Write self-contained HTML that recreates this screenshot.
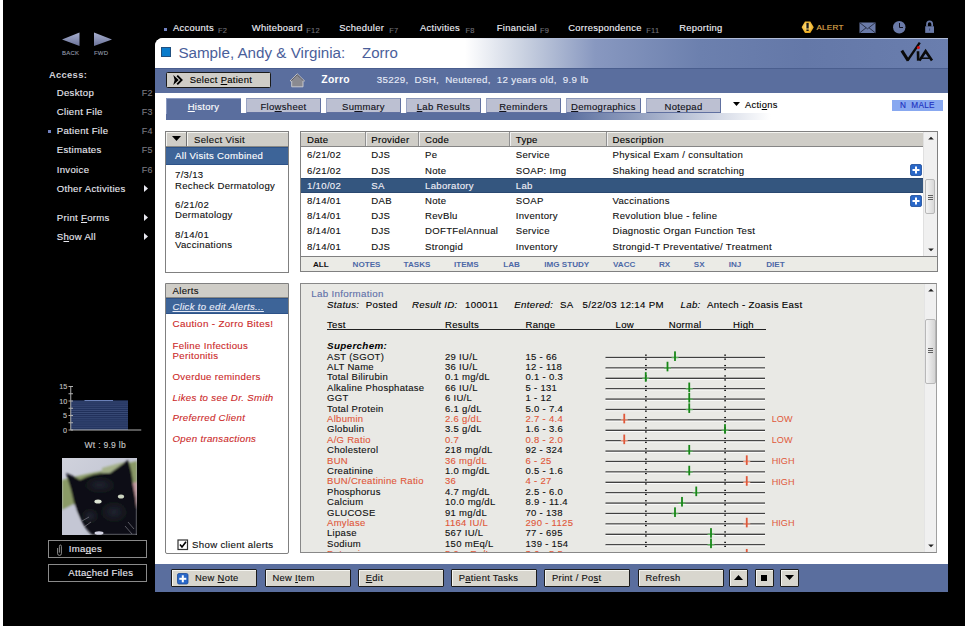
<!DOCTYPE html>
<html><head><meta charset="utf-8"><style>
html,body{margin:0;padding:0}
body{width:980px;height:626px;overflow:hidden;background:#000;position:relative;font-family:"Liberation Sans", sans-serif}
.t{position:absolute;white-space:pre;line-height:14px;font-family:"Liberation Sans", sans-serif}
.s{-webkit-text-stroke:0.12px currentColor}
u{text-decoration:underline}
</style></head><body>
<div style="position:absolute;left:0px;top:0px;width:3px;height:626px;background:#fff"></div>
<div style="position:absolute;left:965px;top:0px;width:15px;height:626px;background:#fff"></div>
<svg style="position:absolute;left:0;top:0" width="150" height="60">
<defs><linearGradient id="ag" x1="0" y1="0" x2="0" y2="1"><stop offset="0" stop-color="#a8b0d0"/><stop offset="1" stop-color="#6a7298"/></linearGradient></defs>
<polygon points="62,39.5 79.5,32.5 79.5,46" fill="url(#ag)"/>
<polygon points="112,39.5 94,32.5 94,46" fill="url(#ag)"/>
</svg>
<div class="t s" style="left:62.00px;top:46.42px;font-size:6.02px;letter-spacing:0.19px;color:#9098a8;font-weight:400;font-style:normal;">BACK</div>
<div class="t s" style="left:94.00px;top:46.42px;font-size:6.02px;letter-spacing:0.19px;color:#9098a8;font-weight:400;font-style:normal;">FWD</div>
<div class="t" style="left:49.00px;top:67.96px;font-size:9.40px;letter-spacing:0.30px;color:#d0d0d8;font-weight:700;font-style:normal;">Access:</div>
<div class="t s" style="left:56.75px;top:85.96px;font-size:9.59px;letter-spacing:0.31px;color:#e8e8f0;font-weight:400;font-style:normal;">Desktop</div>
<div class="t s" style="left:141.75px;top:85.95px;font-size:8.93px;letter-spacing:0.29px;color:#7a7a80;font-weight:400;font-style:normal;">F2</div>
<div class="t s" style="left:56.75px;top:104.96px;font-size:9.59px;letter-spacing:0.31px;color:#e8e8f0;font-weight:400;font-style:normal;">Client File</div>
<div class="t s" style="left:141.75px;top:104.95px;font-size:8.93px;letter-spacing:0.29px;color:#7a7a80;font-weight:400;font-style:normal;">F3</div>
<div class="t s" style="left:56.75px;top:123.96px;font-size:9.59px;letter-spacing:0.31px;color:#e8e8f0;font-weight:400;font-style:normal;">Patient File</div>
<div class="t s" style="left:141.75px;top:123.95px;font-size:8.93px;letter-spacing:0.29px;color:#7a7a80;font-weight:400;font-style:normal;">F4</div>
<div class="t s" style="left:56.75px;top:143.46px;font-size:9.59px;letter-spacing:0.31px;color:#e8e8f0;font-weight:400;font-style:normal;">Estimates</div>
<div class="t s" style="left:141.75px;top:143.45px;font-size:8.93px;letter-spacing:0.29px;color:#7a7a80;font-weight:400;font-style:normal;">F5</div>
<div class="t s" style="left:56.75px;top:162.71px;font-size:9.59px;letter-spacing:0.31px;color:#e8e8f0;font-weight:400;font-style:normal;">Invoice</div>
<div class="t s" style="left:141.75px;top:162.70px;font-size:8.93px;letter-spacing:0.29px;color:#7a7a80;font-weight:400;font-style:normal;">F6</div>
<div class="t s" style="left:56.75px;top:182.21px;font-size:9.59px;letter-spacing:0.31px;color:#e8e8f0;font-weight:400;font-style:normal;">Other Activities</div>
<div style="position:absolute;left:47.5px;top:129.5px;width:3px;height:3px;background:#7080c0"></div>
<div class="t s" style="left:56.75px;top:210.96px;font-size:9.59px;letter-spacing:0.31px;color:#e8e8f0;font-weight:400;font-style:normal;">Print <u>F</u>orms</div>
<div class="t s" style="left:56.75px;top:230.21px;font-size:9.59px;letter-spacing:0.31px;color:#e8e8f0;font-weight:400;font-style:normal;">S<u>h</u>ow All</div>
<svg style="position:absolute;left:143px;top:185.25px" width="6" height="8"><polygon points="1,0 5,3.5 1,7" fill="#e8e8f0"/></svg>
<svg style="position:absolute;left:143px;top:214.0px" width="6" height="8"><polygon points="1,0 5,3.5 1,7" fill="#e8e8f0"/></svg>
<svg style="position:absolute;left:143px;top:233.25px" width="6" height="8"><polygon points="1,0 5,3.5 1,7" fill="#e8e8f0"/></svg>
<svg style="position:absolute;left:50px;top:380px" width="100" height="60"><rect x="20.75" y="20.25" width="57.25" height="29.75" fill="#20305a"/><line x1="20.75" x2="78" y1="22.00" y2="22.00" stroke="#3c4e7a" stroke-width="0.9"/><line x1="20.75" x2="78" y1="24.10" y2="24.10" stroke="#3c4e7a" stroke-width="0.9"/><line x1="20.75" x2="78" y1="26.20" y2="26.20" stroke="#3c4e7a" stroke-width="0.9"/><line x1="20.75" x2="78" y1="28.30" y2="28.30" stroke="#3c4e7a" stroke-width="0.9"/><line x1="20.75" x2="78" y1="30.40" y2="30.40" stroke="#3c4e7a" stroke-width="0.9"/><line x1="20.75" x2="78" y1="32.50" y2="32.50" stroke="#3c4e7a" stroke-width="0.9"/><line x1="20.75" x2="78" y1="34.60" y2="34.60" stroke="#3c4e7a" stroke-width="0.9"/><line x1="20.75" x2="78" y1="36.70" y2="36.70" stroke="#3c4e7a" stroke-width="0.9"/><line x1="20.75" x2="78" y1="38.80" y2="38.80" stroke="#3c4e7a" stroke-width="0.9"/><line x1="20.75" x2="78" y1="40.90" y2="40.90" stroke="#3c4e7a" stroke-width="0.9"/><line x1="20.75" x2="78" y1="43.00" y2="43.00" stroke="#3c4e7a" stroke-width="0.9"/><line x1="20.75" x2="78" y1="45.10" y2="45.10" stroke="#3c4e7a" stroke-width="0.9"/><line x1="20.75" x2="78" y1="47.20" y2="47.20" stroke="#3c4e7a" stroke-width="0.9"/><line x1="20.75" x2="78" y1="49.30" y2="49.30" stroke="#3c4e7a" stroke-width="0.9"/><line x1="34.5" x2="63" y1="20.5" y2="20.5" stroke="#6a80b8" stroke-width="1"/><line x1="20.75" x2="20.75" y1="6" y2="50" stroke="#b0b0b0" stroke-width="1"/><line x1="20.75" x2="91.25" y1="50" y2="50" stroke="#b0b0b0" stroke-width="1"/><line x1="18.5" x2="23" y1="6.5" y2="6.5" stroke="#b0b0b0" stroke-width="1"/><line x1="18.5" x2="23" y1="21" y2="21" stroke="#b0b0b0" stroke-width="1"/><line x1="18.5" x2="23" y1="35.5" y2="35.5" stroke="#b0b0b0" stroke-width="1"/><line x1="18.5" x2="23" y1="50" y2="50" stroke="#b0b0b0" stroke-width="1"/><line x1="18.5" x2="23" y1="13.75" y2="13.75" stroke="#b0b0b0" stroke-width="1"/><line x1="18.5" x2="23" y1="28.25" y2="28.25" stroke="#b0b0b0" stroke-width="1"/><line x1="18.5" x2="23" y1="42.75" y2="42.75" stroke="#b0b0b0" stroke-width="1"/></svg>
<div class="t s" style="left:59.30px;top:380.43px;font-size:7.20px;letter-spacing:0.00px;color:#c0c0c0;font-weight:400;font-style:normal;">15</div>
<div class="t s" style="left:59.30px;top:394.93px;font-size:7.20px;letter-spacing:0.00px;color:#c0c0c0;font-weight:400;font-style:normal;">10</div>
<div class="t s" style="left:63.00px;top:409.43px;font-size:7.20px;letter-spacing:0.00px;color:#c0c0c0;font-weight:400;font-style:normal;">5</div>
<div class="t s" style="left:63.00px;top:423.93px;font-size:7.20px;letter-spacing:0.00px;color:#c0c0c0;font-weight:400;font-style:normal;">0</div>
<div class="t s" style="left:84.50px;top:437.70px;font-size:8.55px;letter-spacing:0.27px;color:#c8c8c8;font-weight:400;font-style:normal;">Wt : 9.9 lb</div>
<svg style="position:absolute;left:62px;top:458px" width="75" height="77" viewBox="0 0 75 77">
<defs><filter id="bl" x="-5%" y="-5%" width="110%" height="110%"><feGaussianBlur stdDeviation="0.9"/></filter><radialGradient id="fur"><stop offset="0" stop-color="#2c3244" stop-opacity="0.55"/><stop offset="1" stop-color="#2c3244" stop-opacity="0"/></radialGradient>
<linearGradient id="cbg" x1="0" y1="0" x2="1" y2="1"><stop offset="0" stop-color="#d0d2dc"/><stop offset="1" stop-color="#b8bccc"/></linearGradient></defs>
<rect width="75" height="77" fill="url(#cbg)"/>
<g filter="url(#bl)">
<polygon points="0,22 12,19 25,16 45,12 62,6 75,3 75,28 55,22 20,30 12,48 0,56" fill="#8a9a66"/>
<polygon points="40,10 58,5 66,4 58,16 40,16" fill="#a4b088"/>
<polygon points="0,52 12,46 22,77 0,77" fill="#c4c6d4"/>
<polygon points="66,26 75,24 75,64 69,62" fill="#c49a9e"/>
<path d="M4,15 Q12,18 18,22 Q32,14 48,15 L66,2 Q70,12 71,26 Q74,40 75,52 L75,77 L30,77 Q22,70 18,60 Q12,48 9,32 Z" fill="#0f1016"/>
<ellipse cx="38" cy="27" rx="16" ry="9" fill="url(#fur)"/>
<ellipse cx="52" cy="54" rx="14" ry="11" fill="url(#fur)"/>
<ellipse cx="28" cy="58" rx="9" ry="8" fill="url(#fur)"/>
</g>
<ellipse cx="36" cy="43.5" rx="3.6" ry="2.1" fill="#dce4d4"/>
<ellipse cx="59" cy="38.5" rx="3.1" ry="2" fill="#ccd4c0"/>
<ellipse cx="37" cy="75" rx="4.5" ry="1.8" fill="#d4d4e4"/>
<path d="M20,63 L27,59 M22,69 L29,64 M66,64 L72,71 M63,68 L70,76" stroke="#a8a8b0" stroke-width="0.5"/>
</svg>
<div style="position:absolute;left:48.25px;top:540px;width:98.5px;height:17.5px;border:1px solid #8a8a8a;box-sizing:border-box"></div>
<div style="position:absolute;left:48.25px;top:564.25px;width:98.5px;height:17.25px;border:1px solid #8a8a8a;box-sizing:border-box"></div>
<svg style="position:absolute;left:56px;top:544px" width="8" height="13"><path d="M1.6,4 L1.6,9.6 Q1.6,11.4 3.5,11.4 Q5.4,11.4 5.4,9.6 L5.4,2.4 Q5.4,1 4.4,1 Q3.4,1 3.4,2.4 L3.4,8.6" fill="none" stroke="#b8b8b8" stroke-width="0.75"/></svg>
<div class="t s" style="left:68.75px;top:542.46px;font-size:9.59px;letter-spacing:0.31px;color:#e8e8f0;font-weight:400;font-style:normal;">Ima<u>g</u>es</div>
<div class="t s" style="left:68.25px;top:566.46px;font-size:9.59px;letter-spacing:0.31px;color:#e8e8f0;font-weight:400;font-style:normal;">Atta<u>c</u>hed Files</div>
<div style="position:absolute;left:164px;top:27.5px;width:3px;height:3px;background:#7080c0"></div>
<div class="t s" style="left:173.00px;top:21.46px;font-size:9.40px;letter-spacing:0.30px;color:#f0f0f8;font-weight:400;font-style:normal;">Accounts</div>
<div class="t s" style="left:218.00px;top:24.44px;font-size:7.52px;letter-spacing:0.24px;color:#707078;font-weight:400;font-style:normal;">F2</div>
<div class="t s" style="left:251.75px;top:21.46px;font-size:9.40px;letter-spacing:0.30px;color:#f0f0f8;font-weight:400;font-style:normal;">Whiteboard</div>
<div class="t s" style="left:306.25px;top:24.44px;font-size:7.52px;letter-spacing:0.24px;color:#707078;font-weight:400;font-style:normal;">F12</div>
<div class="t s" style="left:339.25px;top:21.46px;font-size:9.40px;letter-spacing:0.30px;color:#f0f0f8;font-weight:400;font-style:normal;">Scheduler</div>
<div class="t s" style="left:389.25px;top:24.44px;font-size:7.52px;letter-spacing:0.24px;color:#707078;font-weight:400;font-style:normal;">F7</div>
<div class="t s" style="left:420.00px;top:21.46px;font-size:9.40px;letter-spacing:0.30px;color:#f0f0f8;font-weight:400;font-style:normal;">Activities</div>
<div class="t s" style="left:465.50px;top:24.44px;font-size:7.52px;letter-spacing:0.24px;color:#707078;font-weight:400;font-style:normal;">F8</div>
<div class="t s" style="left:496.75px;top:21.46px;font-size:9.40px;letter-spacing:0.30px;color:#f0f0f8;font-weight:400;font-style:normal;">Financial</div>
<div class="t s" style="left:540.00px;top:24.44px;font-size:7.52px;letter-spacing:0.24px;color:#707078;font-weight:400;font-style:normal;">F9</div>
<div class="t s" style="left:568.25px;top:21.46px;font-size:9.40px;letter-spacing:0.30px;color:#f0f0f8;font-weight:400;font-style:normal;">Correspondence</div>
<div class="t s" style="left:646.25px;top:24.44px;font-size:7.52px;letter-spacing:0.24px;color:#707078;font-weight:400;font-style:normal;">F11</div>
<div class="t s" style="left:679.25px;top:21.46px;font-size:9.40px;letter-spacing:0.30px;color:#f0f0f8;font-weight:400;font-style:normal;">Reporting</div>
<svg style="position:absolute;left:800px;top:20px" width="140" height="16">
<defs><radialGradient id="yg" cx="0.45" cy="0.45" r="0.6"><stop offset="0" stop-color="#fde6a0"/><stop offset="0.6" stop-color="#f4c040"/><stop offset="1" stop-color="#e09a10"/></radialGradient></defs>
<polygon points="1.6,7.2 5,1.4 10.3,1.4 13.8,7.2 10.3,13 5,13" fill="url(#yg)"/>
<rect x="6.4" y="2.9" width="2.3" height="5.6" fill="#1a1a1a"/><rect x="6.4" y="9.5" width="2.3" height="1.5" fill="#1a1a1a"/>
<rect x="59.5" y="2.5" width="16" height="10.5" fill="#6a7aa8"/>
<polyline points="59.5,2.5 67.5,8.8 75.5,2.5" fill="none" stroke="#1a2030" stroke-width="0.8"/>
<line x1="59.5" y1="13" x2="66" y2="7.8" stroke="#1a2030" stroke-width="0.8"/><line x1="75.5" y1="13" x2="69" y2="7.8" stroke="#1a2030" stroke-width="0.8"/>
<circle cx="99.25" cy="7.25" r="6.2" fill="#6a7aa8"/>
<polyline points="99.5,3 99.5,7.5 103,7.5" fill="none" stroke="#101020" stroke-width="1"/>
<path d="M127,6.5 L127,4.2 Q127,1.4 129.6,1.4 Q132.2,1.4 132.2,4.2 L132.2,6.5" fill="none" stroke="#6a7aa8" stroke-width="1.7"/>
<rect x="125.2" y="6.3" width="8.8" height="6.6" fill="#6a7aa8"/><rect x="129.1" y="8.5" width="1" height="2.2" fill="#3a4670"/>
</svg>
<div class="t s" style="left:816.40px;top:21.24px;font-size:8.08px;letter-spacing:0.26px;color:#e0b050;font-weight:400;font-style:normal;">ALERT</div>
<div style="position:absolute;left:155px;top:37.5px;width:793px;height:554.5px;background:#fff;border-top-left-radius:8px"></div>
<div style="position:absolute;left:155px;top:37.5px;width:793px;height:30.5px;border-top-left-radius:8px;background:linear-gradient(to right,#ffffff 0px,#ffffff 310px,#c8d0e0 370px,#8898c0 440px,#6c80ae 545px,#6478a8 650px,#6a7eae 793px)"></div>
<div style="position:absolute;left:161px;top:37.6px;width:787px;height:1.2px;background:linear-gradient(to right,rgba(176,188,216,0) 0px,rgba(176,188,216,0) 300px,#b0bcd8 420px)"></div>
<div style="position:absolute;left:161px;top:47px;width:10px;height:10px;background:#0a7ccc;border:1px solid #205080;box-sizing:border-box"></div>
<div class="t" style="left:178.40px;top:45.72px;font-size:15.20px;letter-spacing:0.00px;color:#4a5e9a;font-weight:400;font-style:normal;">Sample, Andy &amp; Virginia:</div>
<div class="t" style="left:362.00px;top:45.72px;font-size:15.00px;letter-spacing:0.00px;color:#4a5e9a;font-weight:400;font-style:normal;">Zorro</div>
<svg style="position:absolute;left:895px;top:38px" width="45" height="28">
<path d="M6.8,12.6 L13.2,22.6" fill="none" stroke="#0a0a0a" stroke-width="3"/>
<path d="M12.4,22.6 L24.8,4.6" fill="none" stroke="#0a0a0a" stroke-width="2.4"/>
<path d="M23,13.2 L23.2,22.6" fill="none" stroke="#0a0a0a" stroke-width="2.6"/>
<path d="M24.4,22.6 L30.6,13.2 L37,22.6" fill="none" stroke="#0a0a0a" stroke-width="2.6" stroke-linejoin="miter"/>
<line x1="26.5" y1="20.2" x2="34.5" y2="20.2" stroke="#0a0a0a" stroke-width="1.5"/>
<circle cx="23.4" cy="9.5" r="1.5" fill="#e01010"/>
</svg>
<div style="position:absolute;left:155px;top:67.8px;width:793px;height:25px;background:#5a6e9e;border-top:1px solid #4a5e8e;box-sizing:border-box"></div>
<div style="position:absolute;left:166px;top:71.5px;width:105px;height:16.8px;background:#cfcdc7;border:1.6px solid #1a1a1a;border-radius:1.5px;box-sizing:border-box"></div>
<svg style="position:absolute;left:170px;top:72px" width="16" height="16"><polygon points="3.3,3.1 8.7,8 3.3,12.9 4.6,8" fill="#000"/><polyline points="7.2,3.6 11.6,8 7.2,12.4" fill="none" stroke="#000" stroke-width="1.9"/></svg>
<div class="t s" style="left:189.70px;top:72.96px;font-size:9.45px;letter-spacing:0.30px;color:#000;font-weight:400;font-style:normal;">Select <u>P</u>atient</div>
<svg style="position:absolute;left:288px;top:72px" width="19" height="17"><polygon points="9.2,1.8 16.5,8.9 15,8.9 15,14.8 3.7,14.8 3.7,8.9 2.1,8.9" fill="#8a8a90" stroke="#d0d0d4" stroke-width="0.9"/><polyline points="3.2,8.6 9.2,2.8 15.4,8.6" fill="none" stroke="#303038" stroke-width="0.9" stroke-dasharray="1,0.6"/></svg>
<div class="t" style="left:321.25px;top:72.97px;font-size:10.34px;letter-spacing:0.33px;color:#fff;font-weight:700;font-style:normal;">Zorro</div>
<div class="t s" style="left:376.75px;top:72.96px;font-size:9.78px;letter-spacing:0.31px;color:#e8ecf8;font-weight:400;font-style:normal;">35229,  DSH,  Neutered,  12 years old,  9.9 lb</div>
<div style="position:absolute;left:165.5px;top:113px;width:605px;height:6.7px;background:linear-gradient(to right,#5a6e9e 0px,#5a6e9e 400px,#ffffff 605px)"></div>
<div style="position:absolute;left:166px;top:98px;width:75px;height:16px;background:#5a6e9e;border-top:1.5px solid #8898c0;border-left:1.5px solid #8898c0;box-sizing:border-box"></div>
<div class="t s" style="left:166px;top:99px;width:75px;text-align:center;font-size:9.5px;letter-spacing:0.3px;line-height:16px;color:#fff"><u>H</u>istory</div>
<div style="position:absolute;left:246px;top:98px;width:75px;height:15px;background:#bcc0d2;border:1px solid #6070a0;border-top-color:#8a96b8;border-left-color:#9aa4c4;box-sizing:border-box"></div>
<div class="t s" style="left:246px;top:99.3px;width:75px;text-align:center;font-size:9.5px;letter-spacing:0.3px;line-height:16px;color:#101018">Flo<u>w</u>sheet</div>
<div style="position:absolute;left:326px;top:98px;width:75px;height:15px;background:#bcc0d2;border:1px solid #6070a0;border-top-color:#8a96b8;border-left-color:#9aa4c4;box-sizing:border-box"></div>
<div class="t s" style="left:326px;top:99.3px;width:75px;text-align:center;font-size:9.5px;letter-spacing:0.3px;line-height:16px;color:#101018">Su<u>m</u>mary</div>
<div style="position:absolute;left:406px;top:98px;width:75px;height:15px;background:#bcc0d2;border:1px solid #6070a0;border-top-color:#8a96b8;border-left-color:#9aa4c4;box-sizing:border-box"></div>
<div class="t s" style="left:406px;top:99.3px;width:75px;text-align:center;font-size:9.5px;letter-spacing:0.3px;line-height:16px;color:#101018"><u>L</u>ab Results</div>
<div style="position:absolute;left:486px;top:98px;width:75px;height:15px;background:#bcc0d2;border:1px solid #6070a0;border-top-color:#8a96b8;border-left-color:#9aa4c4;box-sizing:border-box"></div>
<div class="t s" style="left:486px;top:99.3px;width:75px;text-align:center;font-size:9.5px;letter-spacing:0.3px;line-height:16px;color:#101018"><u>R</u>eminders</div>
<div style="position:absolute;left:566px;top:98px;width:75px;height:15px;background:#bcc0d2;border:1px solid #6070a0;border-top-color:#8a96b8;border-left-color:#9aa4c4;box-sizing:border-box"></div>
<div class="t s" style="left:566px;top:99.3px;width:75px;text-align:center;font-size:9.5px;letter-spacing:0.3px;line-height:16px;color:#101018"><u>D</u>emographics</div>
<div style="position:absolute;left:646px;top:98px;width:75px;height:15px;background:#bcc0d2;border:1px solid #6070a0;border-top-color:#8a96b8;border-left-color:#9aa4c4;box-sizing:border-box"></div>
<div class="t s" style="left:646px;top:99.3px;width:75px;text-align:center;font-size:9.5px;letter-spacing:0.3px;line-height:16px;color:#101018">No<u>t</u>epad</div>
<svg style="position:absolute;left:733px;top:102px" width="8" height="6"><polygon points="0,0 7,0 3.5,4" fill="#000"/></svg>
<div class="t s" style="left:745.00px;top:98.46px;font-size:9.31px;letter-spacing:0.30px;color:#000;font-weight:400;font-style:normal;">Acti<u>o</u>ns</div>
<div style="position:absolute;left:892px;top:100px;width:50.5px;height:10.5px;background:#88a8f0"></div>
<div class="t s" style="left:900.00px;top:98.94px;font-size:8.22px;letter-spacing:0.26px;color:#2030c0;font-weight:400;font-style:normal;">N&nbsp;&nbsp;MALE</div>
<div style="position:absolute;left:165px;top:131px;width:124px;height:141.5px;border:1px solid #808080;background:#fff;box-sizing:border-box"></div>
<div style="position:absolute;left:166px;top:132px;width:21px;height:14.5px;background:#cfcdc7;border-right:1px solid #707070;border-bottom:1px solid #8a8a86;box-shadow:inset 1px 1px 0 #f4f4f0;box-sizing:border-box"></div>
<div style="position:absolute;left:187px;top:132px;width:101px;height:14.5px;background:#cfcdc7;border-bottom:1px solid #8a8a86;box-shadow:inset 1px 1px 0 #f4f4f0;box-sizing:border-box"></div>
<svg style="position:absolute;left:171px;top:135px" width="12" height="8"><polygon points="1,1 10,1 5.5,6" fill="#000"/></svg>
<div class="t s" style="left:194.00px;top:133.06px;font-size:9.59px;letter-spacing:0.31px;color:#101010;font-weight:400;font-style:normal;">Select Visit</div>
<div style="position:absolute;left:166px;top:146.5px;width:122px;height:18.5px;background:#3d6498;border-top:1px solid #2d5288;border-bottom:1px solid #2d5288;box-sizing:border-box"></div>
<div class="t s" style="left:175.00px;top:149.46px;font-size:9.59px;letter-spacing:0.31px;color:#fff;font-weight:400;font-style:normal;">All Visits Combined</div>
<div class="t s" style="left:175.00px;top:168.46px;font-size:9.59px;letter-spacing:0.31px;color:#101010;font-weight:400;font-style:normal;">7/3/13</div>
<div class="t s" style="left:175.00px;top:178.96px;font-size:9.59px;letter-spacing:0.31px;color:#101010;font-weight:400;font-style:normal;">Recheck Dermatology</div>
<div class="t s" style="left:175.00px;top:197.96px;font-size:9.59px;letter-spacing:0.31px;color:#101010;font-weight:400;font-style:normal;">6/21/02</div>
<div class="t s" style="left:175.00px;top:208.46px;font-size:9.59px;letter-spacing:0.31px;color:#101010;font-weight:400;font-style:normal;">Dermatology</div>
<div class="t s" style="left:175.00px;top:227.96px;font-size:9.59px;letter-spacing:0.31px;color:#101010;font-weight:400;font-style:normal;">8/14/01</div>
<div class="t s" style="left:175.00px;top:238.46px;font-size:9.59px;letter-spacing:0.31px;color:#101010;font-weight:400;font-style:normal;">Vaccinations</div>
<div style="position:absolute;left:300px;top:131px;width:637.5px;height:141px;border:1px solid #808080;background:#fff;box-sizing:border-box"></div>
<div style="position:absolute;left:301px;top:132px;width:622px;height:15px;background:#cfcdc7;border-top:1px solid #f4f4f0;border-bottom:1px solid #858585;box-sizing:border-box"></div>
<div style="position:absolute;left:364.5px;top:132px;width:1px;height:14px;background:#909090"></div>
<div style="position:absolute;left:365.5px;top:132px;width:1px;height:14px;background:#f0f0f0"></div>
<div style="position:absolute;left:418px;top:132px;width:1px;height:14px;background:#909090"></div>
<div style="position:absolute;left:419px;top:132px;width:1px;height:14px;background:#f0f0f0"></div>
<div style="position:absolute;left:508.75px;top:132px;width:1px;height:14px;background:#909090"></div>
<div style="position:absolute;left:509.75px;top:132px;width:1px;height:14px;background:#f0f0f0"></div>
<div style="position:absolute;left:605.5px;top:132px;width:1px;height:14px;background:#909090"></div>
<div style="position:absolute;left:606.5px;top:132px;width:1px;height:14px;background:#f0f0f0"></div>
<div class="t s" style="left:307.00px;top:133.16px;font-size:9.59px;letter-spacing:0.31px;color:#000;font-weight:400;font-style:normal;">Date</div>
<div class="t s" style="left:371.25px;top:133.16px;font-size:9.59px;letter-spacing:0.31px;color:#000;font-weight:400;font-style:normal;">Provider</div>
<div class="t s" style="left:425.00px;top:133.16px;font-size:9.59px;letter-spacing:0.31px;color:#000;font-weight:400;font-style:normal;">Code</div>
<div class="t s" style="left:515.75px;top:133.16px;font-size:9.59px;letter-spacing:0.31px;color:#000;font-weight:400;font-style:normal;">Type</div>
<div class="t s" style="left:612.50px;top:133.16px;font-size:9.59px;letter-spacing:0.31px;color:#000;font-weight:400;font-style:normal;">Description</div>
<div class="t s" style="left:307.00px;top:148.46px;font-size:9.59px;letter-spacing:0.31px;color:#101010;font-weight:400;font-style:normal;">6/21/02</div>
<div class="t s" style="left:371.25px;top:148.46px;font-size:9.59px;letter-spacing:0.31px;color:#101010;font-weight:400;font-style:normal;">DJS</div>
<div class="t s" style="left:425.00px;top:148.46px;font-size:9.59px;letter-spacing:0.31px;color:#101010;font-weight:400;font-style:normal;">Pe</div>
<div class="t s" style="left:515.75px;top:148.46px;font-size:9.59px;letter-spacing:0.31px;color:#101010;font-weight:400;font-style:normal;">Service</div>
<div class="t s" style="left:612.50px;top:148.46px;font-size:9.59px;letter-spacing:0.31px;color:#101010;font-weight:400;font-style:normal;">Physical Exam / consultation</div>
<div class="t s" style="left:307.00px;top:163.66px;font-size:9.59px;letter-spacing:0.31px;color:#101010;font-weight:400;font-style:normal;">6/21/02</div>
<div class="t s" style="left:371.25px;top:163.66px;font-size:9.59px;letter-spacing:0.31px;color:#101010;font-weight:400;font-style:normal;">DJS</div>
<div class="t s" style="left:425.00px;top:163.66px;font-size:9.59px;letter-spacing:0.31px;color:#101010;font-weight:400;font-style:normal;">Note</div>
<div class="t s" style="left:515.75px;top:163.66px;font-size:9.59px;letter-spacing:0.31px;color:#101010;font-weight:400;font-style:normal;">SOAP: Img</div>
<div class="t s" style="left:612.50px;top:163.66px;font-size:9.59px;letter-spacing:0.31px;color:#101010;font-weight:400;font-style:normal;">Shaking head and scratching</div>
<div style="position:absolute;left:301px;top:177.5px;width:622px;height:15px;background:#34567f;border-top:1px solid #2a4870;border-bottom:1px solid #2a4870;box-sizing:border-box"></div>
<div class="t s" style="left:307.00px;top:178.86px;font-size:9.59px;letter-spacing:0.31px;color:#f0f0f8;font-weight:400;font-style:normal;">1/10/02</div>
<div class="t s" style="left:371.25px;top:178.86px;font-size:9.59px;letter-spacing:0.31px;color:#f0f0f8;font-weight:400;font-style:normal;">SA</div>
<div class="t s" style="left:425.00px;top:178.86px;font-size:9.59px;letter-spacing:0.31px;color:#f0f0f8;font-weight:400;font-style:normal;">Laboratory</div>
<div class="t s" style="left:515.75px;top:178.86px;font-size:9.59px;letter-spacing:0.31px;color:#f0f0f8;font-weight:400;font-style:normal;">Lab</div>
<div class="t s" style="left:612.50px;top:178.86px;font-size:9.59px;letter-spacing:0.31px;color:#f0f0f8;font-weight:400;font-style:normal;"></div>
<div class="t s" style="left:307.00px;top:194.06px;font-size:9.59px;letter-spacing:0.31px;color:#101010;font-weight:400;font-style:normal;">8/14/01</div>
<div class="t s" style="left:371.25px;top:194.06px;font-size:9.59px;letter-spacing:0.31px;color:#101010;font-weight:400;font-style:normal;">DAB</div>
<div class="t s" style="left:425.00px;top:194.06px;font-size:9.59px;letter-spacing:0.31px;color:#101010;font-weight:400;font-style:normal;">Note</div>
<div class="t s" style="left:515.75px;top:194.06px;font-size:9.59px;letter-spacing:0.31px;color:#101010;font-weight:400;font-style:normal;">SOAP</div>
<div class="t s" style="left:612.50px;top:194.06px;font-size:9.59px;letter-spacing:0.31px;color:#101010;font-weight:400;font-style:normal;">Vaccinations</div>
<div class="t s" style="left:307.00px;top:209.26px;font-size:9.59px;letter-spacing:0.31px;color:#101010;font-weight:400;font-style:normal;">8/14/01</div>
<div class="t s" style="left:371.25px;top:209.26px;font-size:9.59px;letter-spacing:0.31px;color:#101010;font-weight:400;font-style:normal;">DJS</div>
<div class="t s" style="left:425.00px;top:209.26px;font-size:9.59px;letter-spacing:0.31px;color:#101010;font-weight:400;font-style:normal;">RevBlu</div>
<div class="t s" style="left:515.75px;top:209.26px;font-size:9.59px;letter-spacing:0.31px;color:#101010;font-weight:400;font-style:normal;">Inventory</div>
<div class="t s" style="left:612.50px;top:209.26px;font-size:9.59px;letter-spacing:0.31px;color:#101010;font-weight:400;font-style:normal;">Revolution blue - feline</div>
<div class="t s" style="left:307.00px;top:224.46px;font-size:9.59px;letter-spacing:0.31px;color:#101010;font-weight:400;font-style:normal;">8/14/01</div>
<div class="t s" style="left:371.25px;top:224.46px;font-size:9.59px;letter-spacing:0.31px;color:#101010;font-weight:400;font-style:normal;">DJS</div>
<div class="t s" style="left:425.00px;top:224.46px;font-size:9.59px;letter-spacing:0.31px;color:#101010;font-weight:400;font-style:normal;">DOFTFelAnnual</div>
<div class="t s" style="left:515.75px;top:224.46px;font-size:9.59px;letter-spacing:0.31px;color:#101010;font-weight:400;font-style:normal;">Service</div>
<div class="t s" style="left:612.50px;top:224.46px;font-size:9.59px;letter-spacing:0.31px;color:#101010;font-weight:400;font-style:normal;">Diagnostic Organ Function Test</div>
<div class="t s" style="left:307.00px;top:239.66px;font-size:9.59px;letter-spacing:0.31px;color:#101010;font-weight:400;font-style:normal;">8/14/01</div>
<div class="t s" style="left:371.25px;top:239.66px;font-size:9.59px;letter-spacing:0.31px;color:#101010;font-weight:400;font-style:normal;">DJS</div>
<div class="t s" style="left:425.00px;top:239.66px;font-size:9.59px;letter-spacing:0.31px;color:#101010;font-weight:400;font-style:normal;">Strongid</div>
<div class="t s" style="left:515.75px;top:239.66px;font-size:9.59px;letter-spacing:0.31px;color:#101010;font-weight:400;font-style:normal;">Inventory</div>
<div class="t s" style="left:612.50px;top:239.66px;font-size:9.59px;letter-spacing:0.31px;color:#101010;font-weight:400;font-style:normal;">Strongid-T Preventative/ Treatment</div>
<svg style="position:absolute;left:910px;top:163.75px" width="12" height="12"><rect x="0.5" y="0.5" width="11" height="11" rx="1.5" fill="#2a68c8" stroke="#1a4a98" stroke-width="0.8"/><rect x="2.5" y="5" width="7" height="2" fill="#fff"/><rect x="5" y="2.5" width="2" height="7" fill="#fff"/></svg>
<svg style="position:absolute;left:910px;top:194.5px" width="12" height="12"><rect x="0.5" y="0.5" width="11" height="11" rx="1.5" fill="#2a68c8" stroke="#1a4a98" stroke-width="0.8"/><rect x="2.5" y="5" width="7" height="2" fill="#fff"/><rect x="5" y="2.5" width="2" height="7" fill="#fff"/></svg>
<div style="position:absolute;left:923px;top:132px;width:13.5px;height:124px;background:#f0f0f0;border-left:1px solid #e0e0e0;box-sizing:border-box"></div>
<div style="position:absolute;left:925px;top:178.75px;width:10px;height:35.5px;background:linear-gradient(to right,#f4f4f4,#d8d8d8);border:1px solid #b8b8b8;border-radius:2px;box-sizing:border-box"></div>
<svg style="position:absolute;left:927px;top:135px" width="8" height="6"><polygon points="1.2,4.5 4,1.7 6.8,4.5" fill="#202020"/></svg>
<svg style="position:absolute;left:927px;top:247px" width="8" height="6"><polygon points="1.2,1.5 4,4.3 6.8,1.5" fill="#202020"/></svg>
<div style="position:absolute;left:928px;top:194.5px;width:5px;height:0.8px;background:#606060"></div>
<div style="position:absolute;left:928px;top:196.5px;width:5px;height:0.8px;background:#606060"></div>
<div style="position:absolute;left:928px;top:198.5px;width:5px;height:0.8px;background:#606060"></div>
<div style="position:absolute;left:301px;top:256px;width:635.5px;height:15px;background:#ebebe6;border-top:1px solid #808080;box-sizing:border-box"></div>
<div class="t" style="left:313.00px;top:257.74px;font-size:8.10px;letter-spacing:0.00px;color:#101010;font-weight:700;font-style:normal;">ALL</div>
<div class="t" style="left:352.60px;top:257.74px;font-size:8.10px;letter-spacing:0.00px;color:#4d68a6;font-weight:700;font-style:normal;">NOTES</div>
<div class="t" style="left:403.60px;top:257.74px;font-size:8.10px;letter-spacing:0.00px;color:#4d68a6;font-weight:700;font-style:normal;">TASKS</div>
<div class="t" style="left:454.00px;top:257.74px;font-size:8.10px;letter-spacing:0.00px;color:#4d68a6;font-weight:700;font-style:normal;">ITEMS</div>
<div class="t" style="left:503.25px;top:257.74px;font-size:8.10px;letter-spacing:0.00px;color:#4d68a6;font-weight:700;font-style:normal;">LAB</div>
<div class="t" style="left:544.25px;top:257.74px;font-size:8.10px;letter-spacing:0.00px;color:#4d68a6;font-weight:700;font-style:normal;">IMG STUDY</div>
<div class="t" style="left:613.00px;top:257.74px;font-size:8.10px;letter-spacing:0.00px;color:#4d68a6;font-weight:700;font-style:normal;">VACC</div>
<div class="t" style="left:659.00px;top:257.74px;font-size:8.10px;letter-spacing:0.00px;color:#4d68a6;font-weight:700;font-style:normal;">RX</div>
<div class="t" style="left:693.75px;top:257.74px;font-size:8.10px;letter-spacing:0.00px;color:#4d68a6;font-weight:700;font-style:normal;">SX</div>
<div class="t" style="left:728.75px;top:257.74px;font-size:8.10px;letter-spacing:0.00px;color:#4d68a6;font-weight:700;font-style:normal;">INJ</div>
<div class="t" style="left:766.25px;top:257.74px;font-size:8.10px;letter-spacing:0.00px;color:#4d68a6;font-weight:700;font-style:normal;">DIET</div>
<div style="position:absolute;left:165px;top:283px;width:124px;height:270.8px;border:1px solid #808080;border-radius:0 0 2px 2px;background:#fff;box-sizing:border-box"></div>
<div style="position:absolute;left:166px;top:284px;width:122px;height:14px;background:#cfcdc7;border-bottom:1px solid #8a8a86;box-sizing:border-box"></div>
<div class="t s" style="left:172.50px;top:284.46px;font-size:9.59px;letter-spacing:0.31px;color:#101010;font-weight:400;font-style:normal;">Alerts</div>
<div style="position:absolute;left:166px;top:298px;width:122px;height:15.75px;background:#3d6498;border-top:1px solid #2d5288;border-bottom:1px solid #2d5288;box-sizing:border-box"></div>
<div class="t s" style="left:172.50px;top:299.96px;font-size:9.59px;letter-spacing:0.31px;color:#e8ecf8;font-weight:400;font-style:italic;"><u>Click to edit Alerts...</u></div>
<div class="t s" style="left:172.50px;top:317.46px;font-size:9.87px;letter-spacing:0.32px;color:#cc2a2a;font-weight:400;font-style:normal;">Caution - Zorro Bites!</div>
<div class="t s" style="left:172.50px;top:338.71px;font-size:9.68px;letter-spacing:0.31px;color:#cc2a2a;font-weight:400;font-style:normal;">Feline Infectious</div>
<div class="t s" style="left:172.50px;top:348.96px;font-size:9.68px;letter-spacing:0.31px;color:#cc2a2a;font-weight:400;font-style:normal;">Peritonitis</div>
<div class="t s" style="left:172.50px;top:369.96px;font-size:9.68px;letter-spacing:0.31px;color:#cc2a2a;font-weight:400;font-style:normal;">Overdue reminders</div>
<div class="t s" style="left:172.50px;top:390.71px;font-size:9.68px;letter-spacing:0.31px;color:#cc2a2a;font-weight:400;font-style:italic;">Likes to see Dr. Smith</div>
<div class="t s" style="left:172.50px;top:411.46px;font-size:9.68px;letter-spacing:0.31px;color:#cc2a2a;font-weight:400;font-style:italic;">Preferred Client</div>
<div class="t s" style="left:172.50px;top:432.46px;font-size:9.68px;letter-spacing:0.31px;color:#cc2a2a;font-weight:400;font-style:italic;">Open transactions</div>
<svg style="position:absolute;left:177px;top:539px" width="12" height="12"><rect x="1" y="1" width="9.5" height="9.5" fill="#fff" stroke="#303030" stroke-width="1.2"/><polyline points="3,5.5 5,8 9,2.8" fill="none" stroke="#000" stroke-width="1.6"/></svg>
<div class="t s" style="left:192.00px;top:537.96px;font-size:9.68px;letter-spacing:0.31px;color:#101010;font-weight:400;font-style:normal;">Show client alerts</div>
<div style="position:absolute;left:300px;top:283px;width:637px;height:269.5px;border:1px solid #888;border-right-color:#a0a0a0;background:#e9e9e5;box-sizing:border-box"></div>
<div class="t s" style="left:311.25px;top:287.21px;font-size:9.78px;letter-spacing:0.31px;color:#6070a8;font-weight:400;font-style:normal;">Lab Information</div>
<div class="t s" style="left:327.00px;top:297.71px;font-size:9.68px;letter-spacing:0.31px;color:#000;font-weight:400;font-style:italic;">Status:</div>
<div class="t s" style="left:365.75px;top:297.71px;font-size:9.68px;letter-spacing:0.31px;color:#000;font-weight:400;font-style:normal;">Posted</div>
<div class="t s" style="left:412.00px;top:297.71px;font-size:9.68px;letter-spacing:0.31px;color:#000;font-weight:400;font-style:italic;">Result ID:</div>
<div class="t s" style="left:465.00px;top:297.71px;font-size:9.68px;letter-spacing:0.31px;color:#000;font-weight:400;font-style:normal;">100011</div>
<div class="t s" style="left:514.25px;top:297.71px;font-size:9.68px;letter-spacing:0.31px;color:#000;font-weight:400;font-style:italic;">Entered:</div>
<div class="t s" style="left:560.00px;top:297.71px;font-size:9.68px;letter-spacing:0.31px;color:#000;font-weight:400;font-style:normal;">SA</div>
<div class="t s" style="left:582.50px;top:297.71px;font-size:9.68px;letter-spacing:0.31px;color:#000;font-weight:400;font-style:normal;">5/22/03 12:14 PM</div>
<div class="t s" style="left:680.50px;top:297.71px;font-size:9.68px;letter-spacing:0.31px;color:#000;font-weight:400;font-style:italic;">Lab:</div>
<div class="t s" style="left:707.00px;top:297.71px;font-size:9.68px;letter-spacing:0.31px;color:#000;font-weight:400;font-style:normal;">Antech - Zoasis East</div>
<div class="t s" style="left:327.00px;top:318.46px;font-size:9.59px;letter-spacing:0.31px;color:#000;font-weight:400;font-style:normal;">Test</div>
<div class="t s" style="left:445.00px;top:318.46px;font-size:9.59px;letter-spacing:0.31px;color:#000;font-weight:400;font-style:normal;">Results</div>
<div class="t s" style="left:525.50px;top:318.46px;font-size:9.59px;letter-spacing:0.31px;color:#000;font-weight:400;font-style:normal;">Range</div>
<div class="t s" style="left:615.50px;top:318.46px;font-size:9.59px;letter-spacing:0.31px;color:#000;font-weight:400;font-style:normal;">Low</div>
<div class="t s" style="left:668.75px;top:318.46px;font-size:9.59px;letter-spacing:0.31px;color:#000;font-weight:400;font-style:normal;">Normal</div>
<div class="t s" style="left:733.00px;top:318.46px;font-size:9.59px;letter-spacing:0.31px;color:#000;font-weight:400;font-style:normal;">High</div>
<div style="position:absolute;left:327px;top:329px;width:439px;height:1.3px;background:#202020"></div>
<div class="t" style="left:327.00px;top:339.21px;font-size:9.87px;letter-spacing:0.32px;color:#000;font-weight:700;font-style:italic;">Superchem:</div>
<div style="position:absolute;left:301px;top:284px;width:622px;height:267.5px;overflow:hidden">
<div class="t s" style="left:26px;top:65.65px;font-size:9.5px;letter-spacing:0.3px;color:#101010">AST (SGOT)</div>
<div class="t s" style="left:144px;top:65.65px;font-size:9.5px;letter-spacing:0.3px;color:#101010">29 IU/L</div>
<div class="t s" style="left:224.5px;top:65.65px;font-size:9.5px;letter-spacing:0.3px;color:#101010">15 - 66</div>
<div class="t s" style="left:26px;top:76.05px;font-size:9.5px;letter-spacing:0.3px;color:#101010">ALT Name</div>
<div class="t s" style="left:144px;top:76.05px;font-size:9.5px;letter-spacing:0.3px;color:#101010">36 IU/L</div>
<div class="t s" style="left:224.5px;top:76.05px;font-size:9.5px;letter-spacing:0.3px;color:#101010">12 - 118</div>
<div class="t s" style="left:26px;top:86.45px;font-size:9.5px;letter-spacing:0.3px;color:#101010">Total Bilirubin</div>
<div class="t s" style="left:144px;top:86.45px;font-size:9.5px;letter-spacing:0.3px;color:#101010">0.1 mg/dL</div>
<div class="t s" style="left:224.5px;top:86.45px;font-size:9.5px;letter-spacing:0.3px;color:#101010">0.1 - 0.3</div>
<div class="t s" style="left:26px;top:96.85px;font-size:9.5px;letter-spacing:0.3px;color:#101010">Alkaline Phosphatase</div>
<div class="t s" style="left:144px;top:96.85px;font-size:9.5px;letter-spacing:0.3px;color:#101010">66 IU/L</div>
<div class="t s" style="left:224.5px;top:96.85px;font-size:9.5px;letter-spacing:0.3px;color:#101010">5 - 131</div>
<div class="t s" style="left:26px;top:107.25px;font-size:9.5px;letter-spacing:0.3px;color:#101010">GGT</div>
<div class="t s" style="left:144px;top:107.25px;font-size:9.5px;letter-spacing:0.3px;color:#101010">6 IU/L</div>
<div class="t s" style="left:224.5px;top:107.25px;font-size:9.5px;letter-spacing:0.3px;color:#101010">1 - 12</div>
<div class="t s" style="left:26px;top:117.65px;font-size:9.5px;letter-spacing:0.3px;color:#101010">Total Protein</div>
<div class="t s" style="left:144px;top:117.65px;font-size:9.5px;letter-spacing:0.3px;color:#101010">6.1 g/dL</div>
<div class="t s" style="left:224.5px;top:117.65px;font-size:9.5px;letter-spacing:0.3px;color:#101010">5.0 - 7.4</div>
<div class="t s" style="left:26px;top:128.05px;font-size:9.5px;letter-spacing:0.3px;color:#e0583a">Albumin</div>
<div class="t s" style="left:144px;top:128.05px;font-size:9.5px;letter-spacing:0.3px;color:#e0583a">2.6 g/dL</div>
<div class="t s" style="left:224.5px;top:128.05px;font-size:9.5px;letter-spacing:0.3px;color:#e0583a">2.7 - 4.4</div>
<div class="t" style="left:470.75px;top:128.45px;font-size:9.1px;color:#e0583a">LOW</div>
<div class="t s" style="left:26px;top:138.45px;font-size:9.5px;letter-spacing:0.3px;color:#101010">Globulin</div>
<div class="t s" style="left:144px;top:138.45px;font-size:9.5px;letter-spacing:0.3px;color:#101010">3.5 g/dL</div>
<div class="t s" style="left:224.5px;top:138.45px;font-size:9.5px;letter-spacing:0.3px;color:#101010">1.6 - 3.6</div>
<div class="t s" style="left:26px;top:148.85px;font-size:9.5px;letter-spacing:0.3px;color:#e0583a">A/G Ratio</div>
<div class="t s" style="left:144px;top:148.85px;font-size:9.5px;letter-spacing:0.3px;color:#e0583a">0.7</div>
<div class="t s" style="left:224.5px;top:148.85px;font-size:9.5px;letter-spacing:0.3px;color:#e0583a">0.8 - 2.0</div>
<div class="t" style="left:470.75px;top:149.25px;font-size:9.1px;color:#e0583a">LOW</div>
<div class="t s" style="left:26px;top:159.25px;font-size:9.5px;letter-spacing:0.3px;color:#101010">Cholesterol</div>
<div class="t s" style="left:144px;top:159.25px;font-size:9.5px;letter-spacing:0.3px;color:#101010">218 mg/dL</div>
<div class="t s" style="left:224.5px;top:159.25px;font-size:9.5px;letter-spacing:0.3px;color:#101010">92 - 324</div>
<div class="t s" style="left:26px;top:169.65px;font-size:9.5px;letter-spacing:0.3px;color:#e0583a">BUN</div>
<div class="t s" style="left:144px;top:169.65px;font-size:9.5px;letter-spacing:0.3px;color:#e0583a">36 mg/dL</div>
<div class="t s" style="left:224.5px;top:169.65px;font-size:9.5px;letter-spacing:0.3px;color:#e0583a">6 - 25</div>
<div class="t" style="left:470.75px;top:170.05px;font-size:9.1px;color:#e0583a">HIGH</div>
<div class="t s" style="left:26px;top:180.05px;font-size:9.5px;letter-spacing:0.3px;color:#101010">Creatinine</div>
<div class="t s" style="left:144px;top:180.05px;font-size:9.5px;letter-spacing:0.3px;color:#101010">1.0 mg/dL</div>
<div class="t s" style="left:224.5px;top:180.05px;font-size:9.5px;letter-spacing:0.3px;color:#101010">0.5 - 1.6</div>
<div class="t s" style="left:26px;top:190.45px;font-size:9.5px;letter-spacing:0.3px;color:#e0583a">BUN/Creatinine Ratio</div>
<div class="t s" style="left:144px;top:190.45px;font-size:9.5px;letter-spacing:0.3px;color:#e0583a">36</div>
<div class="t s" style="left:224.5px;top:190.45px;font-size:9.5px;letter-spacing:0.3px;color:#e0583a">4 - 27</div>
<div class="t" style="left:470.75px;top:190.85px;font-size:9.1px;color:#e0583a">HIGH</div>
<div class="t s" style="left:26px;top:200.85px;font-size:9.5px;letter-spacing:0.3px;color:#101010">Phosphorus</div>
<div class="t s" style="left:144px;top:200.85px;font-size:9.5px;letter-spacing:0.3px;color:#101010">4.7 mg/dL</div>
<div class="t s" style="left:224.5px;top:200.85px;font-size:9.5px;letter-spacing:0.3px;color:#101010">2.5 - 6.0</div>
<div class="t s" style="left:26px;top:211.25px;font-size:9.5px;letter-spacing:0.3px;color:#101010">Calcium</div>
<div class="t s" style="left:144px;top:211.25px;font-size:9.5px;letter-spacing:0.3px;color:#101010">10.0 mg/dL</div>
<div class="t s" style="left:224.5px;top:211.25px;font-size:9.5px;letter-spacing:0.3px;color:#101010">8.9 - 11.4</div>
<div class="t s" style="left:26px;top:221.65px;font-size:9.5px;letter-spacing:0.3px;color:#101010">GLUCOSE</div>
<div class="t s" style="left:144px;top:221.65px;font-size:9.5px;letter-spacing:0.3px;color:#101010">91 mg/dL</div>
<div class="t s" style="left:224.5px;top:221.65px;font-size:9.5px;letter-spacing:0.3px;color:#101010">70 - 138</div>
<div class="t s" style="left:26px;top:232.05px;font-size:9.5px;letter-spacing:0.3px;color:#e0583a">Amylase</div>
<div class="t s" style="left:144px;top:232.05px;font-size:9.5px;letter-spacing:0.3px;color:#e0583a">1164 IU/L</div>
<div class="t s" style="left:224.5px;top:232.05px;font-size:9.5px;letter-spacing:0.3px;color:#e0583a">290 - 1125</div>
<div class="t" style="left:470.75px;top:232.45px;font-size:9.1px;color:#e0583a">HIGH</div>
<div class="t s" style="left:26px;top:242.45px;font-size:9.5px;letter-spacing:0.3px;color:#101010">Lipase</div>
<div class="t s" style="left:144px;top:242.45px;font-size:9.5px;letter-spacing:0.3px;color:#101010">567 IU/L</div>
<div class="t s" style="left:224.5px;top:242.45px;font-size:9.5px;letter-spacing:0.3px;color:#101010">77 - 695</div>
<div class="t s" style="left:26px;top:252.85px;font-size:9.5px;letter-spacing:0.3px;color:#101010">Sodium</div>
<div class="t s" style="left:144px;top:252.85px;font-size:9.5px;letter-spacing:0.3px;color:#101010">150 mEq/L</div>
<div class="t s" style="left:224.5px;top:252.85px;font-size:9.5px;letter-spacing:0.3px;color:#101010">139 - 154</div>
<div class="t s" style="left:26px;top:263.25px;font-size:9.5px;letter-spacing:0.3px;color:#e0583a">Potassium</div>
<div class="t s" style="left:144px;top:263.25px;font-size:9.5px;letter-spacing:0.3px;color:#e0583a">5.9 mEq/L</div>
<div class="t s" style="left:224.5px;top:263.25px;font-size:9.5px;letter-spacing:0.3px;color:#e0583a">3.6 - 5.5</div>
<div class="t" style="left:470.75px;top:263.65px;font-size:9.1px;color:#e0583a">HIGH</div>
<svg style="position:absolute;left:0;top:0" width="622" height="268"><rect x="304.5" y="72.85" width="159.5" height="1.4" fill="#404040"/><rect x="304.5" y="74.25" width="159.5" height="0.9" fill="#ffffff"/><rect x="344.00" y="70.55" width="1.8" height="1.2" fill="#101010"/><rect x="344.00" y="74.55" width="1.8" height="1.2" fill="#101010"/><rect x="423.20" y="70.55" width="1.8" height="1.2" fill="#101010"/><rect x="423.20" y="74.55" width="1.8" height="1.2" fill="#101010"/><rect x="370.50" y="72.85" width="7" height="1.4" fill="#60b060"/><rect x="373.10" y="67.35" width="1.8" height="9.6" fill="#188818"/><rect x="304.5" y="83.25" width="159.5" height="1.4" fill="#404040"/><rect x="304.5" y="84.65" width="159.5" height="0.9" fill="#ffffff"/><rect x="344.00" y="80.95" width="1.8" height="1.2" fill="#101010"/><rect x="344.00" y="84.95" width="1.8" height="1.2" fill="#101010"/><rect x="423.20" y="80.95" width="1.8" height="1.2" fill="#101010"/><rect x="423.20" y="84.95" width="1.8" height="1.2" fill="#101010"/><rect x="363.00" y="83.25" width="7" height="1.4" fill="#60b060"/><rect x="365.60" y="77.75" width="1.8" height="9.6" fill="#188818"/><rect x="304.5" y="93.65" width="159.5" height="1.4" fill="#404040"/><rect x="304.5" y="95.05" width="159.5" height="0.9" fill="#ffffff"/><rect x="344.00" y="91.35" width="1.8" height="1.2" fill="#101010"/><rect x="344.00" y="95.35" width="1.8" height="1.2" fill="#101010"/><rect x="423.20" y="91.35" width="1.8" height="1.2" fill="#101010"/><rect x="423.20" y="95.35" width="1.8" height="1.2" fill="#101010"/><rect x="341.25" y="93.65" width="7" height="1.4" fill="#60b060"/><rect x="343.85" y="88.15" width="1.8" height="9.6" fill="#188818"/><rect x="304.5" y="104.05" width="159.5" height="1.4" fill="#404040"/><rect x="304.5" y="105.45" width="159.5" height="0.9" fill="#ffffff"/><rect x="344.00" y="101.75" width="1.8" height="1.2" fill="#101010"/><rect x="344.00" y="105.75" width="1.8" height="1.2" fill="#101010"/><rect x="423.20" y="101.75" width="1.8" height="1.2" fill="#101010"/><rect x="423.20" y="105.75" width="1.8" height="1.2" fill="#101010"/><rect x="384.75" y="104.05" width="7" height="1.4" fill="#60b060"/><rect x="387.35" y="98.55" width="1.8" height="9.6" fill="#188818"/><rect x="304.5" y="114.45" width="159.5" height="1.4" fill="#404040"/><rect x="304.5" y="115.85" width="159.5" height="0.9" fill="#ffffff"/><rect x="344.00" y="112.15" width="1.8" height="1.2" fill="#101010"/><rect x="344.00" y="116.15" width="1.8" height="1.2" fill="#101010"/><rect x="423.20" y="112.15" width="1.8" height="1.2" fill="#101010"/><rect x="423.20" y="116.15" width="1.8" height="1.2" fill="#101010"/><rect x="384.75" y="114.45" width="7" height="1.4" fill="#60b060"/><rect x="387.35" y="108.95" width="1.8" height="9.6" fill="#188818"/><rect x="304.5" y="124.85" width="159.5" height="1.4" fill="#404040"/><rect x="304.5" y="126.25" width="159.5" height="0.9" fill="#ffffff"/><rect x="344.00" y="122.55" width="1.8" height="1.2" fill="#101010"/><rect x="344.00" y="126.55" width="1.8" height="1.2" fill="#101010"/><rect x="423.20" y="122.55" width="1.8" height="1.2" fill="#101010"/><rect x="423.20" y="126.55" width="1.8" height="1.2" fill="#101010"/><rect x="384.75" y="124.85" width="7" height="1.4" fill="#60b060"/><rect x="387.35" y="119.35" width="1.8" height="9.6" fill="#188818"/><rect x="304.5" y="135.25" width="159.5" height="1.4" fill="#404040"/><rect x="304.5" y="136.65" width="159.5" height="0.9" fill="#ffffff"/><rect x="344.00" y="132.95" width="1.8" height="1.2" fill="#101010"/><rect x="344.00" y="136.95" width="1.8" height="1.2" fill="#101010"/><rect x="423.20" y="132.95" width="1.8" height="1.2" fill="#101010"/><rect x="423.20" y="136.95" width="1.8" height="1.2" fill="#101010"/><rect x="319.75" y="135.25" width="7" height="1.4" fill="#f0a088"/><rect x="322.35" y="129.75" width="1.8" height="9.6" fill="#e0583a"/><rect x="304.5" y="145.65" width="159.5" height="1.4" fill="#404040"/><rect x="304.5" y="147.05" width="159.5" height="0.9" fill="#ffffff"/><rect x="344.00" y="143.35" width="1.8" height="1.2" fill="#101010"/><rect x="344.00" y="147.35" width="1.8" height="1.2" fill="#101010"/><rect x="423.20" y="143.35" width="1.8" height="1.2" fill="#101010"/><rect x="423.20" y="147.35" width="1.8" height="1.2" fill="#101010"/><rect x="420.50" y="145.65" width="7" height="1.4" fill="#60b060"/><rect x="423.10" y="140.15" width="1.8" height="9.6" fill="#188818"/><rect x="304.5" y="156.05" width="159.5" height="1.4" fill="#404040"/><rect x="304.5" y="157.45" width="159.5" height="0.9" fill="#ffffff"/><rect x="344.00" y="153.75" width="1.8" height="1.2" fill="#101010"/><rect x="344.00" y="157.75" width="1.8" height="1.2" fill="#101010"/><rect x="423.20" y="153.75" width="1.8" height="1.2" fill="#101010"/><rect x="423.20" y="157.75" width="1.8" height="1.2" fill="#101010"/><rect x="319.75" y="156.05" width="7" height="1.4" fill="#f0a088"/><rect x="322.35" y="150.55" width="1.8" height="9.6" fill="#e0583a"/><rect x="304.5" y="166.45" width="159.5" height="1.4" fill="#404040"/><rect x="304.5" y="167.85" width="159.5" height="0.9" fill="#ffffff"/><rect x="344.00" y="164.15" width="1.8" height="1.2" fill="#101010"/><rect x="344.00" y="168.15" width="1.8" height="1.2" fill="#101010"/><rect x="423.20" y="164.15" width="1.8" height="1.2" fill="#101010"/><rect x="423.20" y="168.15" width="1.8" height="1.2" fill="#101010"/><rect x="384.75" y="166.45" width="7" height="1.4" fill="#60b060"/><rect x="387.35" y="160.95" width="1.8" height="9.6" fill="#188818"/><rect x="304.5" y="176.85" width="159.5" height="1.4" fill="#404040"/><rect x="304.5" y="178.25" width="159.5" height="0.9" fill="#ffffff"/><rect x="344.00" y="174.55" width="1.8" height="1.2" fill="#101010"/><rect x="344.00" y="178.55" width="1.8" height="1.2" fill="#101010"/><rect x="423.20" y="174.55" width="1.8" height="1.2" fill="#101010"/><rect x="423.20" y="178.55" width="1.8" height="1.2" fill="#101010"/><rect x="442.25" y="176.85" width="7" height="1.4" fill="#f0a088"/><rect x="444.85" y="171.35" width="1.8" height="9.6" fill="#e0583a"/><rect x="304.5" y="187.25" width="159.5" height="1.4" fill="#404040"/><rect x="304.5" y="188.65" width="159.5" height="0.9" fill="#ffffff"/><rect x="344.00" y="184.95" width="1.8" height="1.2" fill="#101010"/><rect x="344.00" y="188.95" width="1.8" height="1.2" fill="#101010"/><rect x="423.20" y="184.95" width="1.8" height="1.2" fill="#101010"/><rect x="423.20" y="188.95" width="1.8" height="1.2" fill="#101010"/><rect x="384.75" y="187.25" width="7" height="1.4" fill="#60b060"/><rect x="387.35" y="181.75" width="1.8" height="9.6" fill="#188818"/><rect x="304.5" y="197.65" width="159.5" height="1.4" fill="#404040"/><rect x="304.5" y="199.05" width="159.5" height="0.9" fill="#ffffff"/><rect x="344.00" y="195.35" width="1.8" height="1.2" fill="#101010"/><rect x="344.00" y="199.35" width="1.8" height="1.2" fill="#101010"/><rect x="423.20" y="195.35" width="1.8" height="1.2" fill="#101010"/><rect x="423.20" y="199.35" width="1.8" height="1.2" fill="#101010"/><rect x="442.25" y="197.65" width="7" height="1.4" fill="#f0a088"/><rect x="444.85" y="192.15" width="1.8" height="9.6" fill="#e0583a"/><rect x="304.5" y="208.05" width="159.5" height="1.4" fill="#404040"/><rect x="304.5" y="209.45" width="159.5" height="0.9" fill="#ffffff"/><rect x="344.00" y="205.75" width="1.8" height="1.2" fill="#101010"/><rect x="344.00" y="209.75" width="1.8" height="1.2" fill="#101010"/><rect x="423.20" y="205.75" width="1.8" height="1.2" fill="#101010"/><rect x="423.20" y="209.75" width="1.8" height="1.2" fill="#101010"/><rect x="391.75" y="208.05" width="7" height="1.4" fill="#60b060"/><rect x="394.35" y="202.55" width="1.8" height="9.6" fill="#188818"/><rect x="304.5" y="218.45" width="159.5" height="1.4" fill="#404040"/><rect x="304.5" y="219.85" width="159.5" height="0.9" fill="#ffffff"/><rect x="344.00" y="216.15" width="1.8" height="1.2" fill="#101010"/><rect x="344.00" y="220.15" width="1.8" height="1.2" fill="#101010"/><rect x="423.20" y="216.15" width="1.8" height="1.2" fill="#101010"/><rect x="423.20" y="220.15" width="1.8" height="1.2" fill="#101010"/><rect x="377.50" y="218.45" width="7" height="1.4" fill="#60b060"/><rect x="380.10" y="212.95" width="1.8" height="9.6" fill="#188818"/><rect x="304.5" y="228.85" width="159.5" height="1.4" fill="#404040"/><rect x="304.5" y="230.25" width="159.5" height="0.9" fill="#ffffff"/><rect x="344.00" y="226.55" width="1.8" height="1.2" fill="#101010"/><rect x="344.00" y="230.55" width="1.8" height="1.2" fill="#101010"/><rect x="423.20" y="226.55" width="1.8" height="1.2" fill="#101010"/><rect x="423.20" y="230.55" width="1.8" height="1.2" fill="#101010"/><rect x="370.50" y="228.85" width="7" height="1.4" fill="#60b060"/><rect x="373.10" y="223.35" width="1.8" height="9.6" fill="#188818"/><rect x="304.5" y="239.25" width="159.5" height="1.4" fill="#404040"/><rect x="304.5" y="240.65" width="159.5" height="0.9" fill="#ffffff"/><rect x="344.00" y="236.95" width="1.8" height="1.2" fill="#101010"/><rect x="344.00" y="240.95" width="1.8" height="1.2" fill="#101010"/><rect x="423.20" y="236.95" width="1.8" height="1.2" fill="#101010"/><rect x="423.20" y="240.95" width="1.8" height="1.2" fill="#101010"/><rect x="442.25" y="239.25" width="7" height="1.4" fill="#f0a088"/><rect x="444.85" y="233.75" width="1.8" height="9.6" fill="#e0583a"/><rect x="304.5" y="249.65" width="159.5" height="1.4" fill="#404040"/><rect x="304.5" y="251.05" width="159.5" height="0.9" fill="#ffffff"/><rect x="344.00" y="247.35" width="1.8" height="1.2" fill="#101010"/><rect x="344.00" y="251.35" width="1.8" height="1.2" fill="#101010"/><rect x="423.20" y="247.35" width="1.8" height="1.2" fill="#101010"/><rect x="423.20" y="251.35" width="1.8" height="1.2" fill="#101010"/><rect x="406.50" y="249.65" width="7" height="1.4" fill="#60b060"/><rect x="409.10" y="244.15" width="1.8" height="9.6" fill="#188818"/><rect x="304.5" y="260.05" width="159.5" height="1.4" fill="#404040"/><rect x="304.5" y="261.45" width="159.5" height="0.9" fill="#ffffff"/><rect x="344.00" y="257.75" width="1.8" height="1.2" fill="#101010"/><rect x="344.00" y="261.75" width="1.8" height="1.2" fill="#101010"/><rect x="423.20" y="257.75" width="1.8" height="1.2" fill="#101010"/><rect x="423.20" y="261.75" width="1.8" height="1.2" fill="#101010"/><rect x="406.50" y="260.05" width="7" height="1.4" fill="#60b060"/><rect x="409.10" y="254.55" width="1.8" height="9.6" fill="#188818"/><rect x="304.5" y="270.45" width="159.5" height="1.4" fill="#404040"/><rect x="304.5" y="271.85" width="159.5" height="0.9" fill="#ffffff"/><rect x="344.00" y="268.15" width="1.8" height="1.2" fill="#101010"/><rect x="344.00" y="272.15" width="1.8" height="1.2" fill="#101010"/><rect x="423.20" y="268.15" width="1.8" height="1.2" fill="#101010"/><rect x="423.20" y="272.15" width="1.8" height="1.2" fill="#101010"/><rect x="442.25" y="270.45" width="7" height="1.4" fill="#f0a088"/><rect x="444.85" y="264.95" width="1.8" height="9.6" fill="#e0583a"/></svg>
</div>
<div style="position:absolute;left:923.5px;top:284px;width:12.5px;height:267.5px;background:#f0f0f0;border-left:1px solid #e4e4e4;box-sizing:border-box"></div>
<div style="position:absolute;left:925px;top:318.75px;width:10.5px;height:65px;background:linear-gradient(to right,#f4f4f4,#d4d4d4);border:1px solid #b8b8b8;border-radius:2px;box-sizing:border-box"></div>
<svg style="position:absolute;left:927px;top:287px" width="8" height="6"><polygon points="1.2,4.5 4,1.7 6.8,4.5" fill="#202020"/></svg>
<svg style="position:absolute;left:927px;top:543px" width="8" height="6"><polygon points="1.2,1.5 4,4.3 6.8,1.5" fill="#202020"/></svg>
<div style="position:absolute;left:928px;top:347.5px;width:5px;height:0.8px;background:#606060"></div>
<div style="position:absolute;left:928px;top:349.5px;width:5px;height:0.8px;background:#606060"></div>
<div style="position:absolute;left:928px;top:351.5px;width:5px;height:0.8px;background:#606060"></div>
<div style="position:absolute;left:155px;top:564px;width:793px;height:27.5px;background:#5a6e9e"></div>
<div style="position:absolute;left:171.25px;top:569.2px;width:86px;height:17.9px;background:#d8d6ce;border:1.5px solid #1c1c1c;border-radius:1px;box-shadow:inset 1px 1px 0 #f4f4f0;box-sizing:border-box"></div>
<div class="t s" style="left:195.00px;top:571.06px;font-size:9.40px;letter-spacing:0.30px;color:#101010;font-weight:400;font-style:normal;">New <u>N</u>ote</div>
<div style="position:absolute;left:264.5px;top:569.2px;width:86px;height:17.9px;background:#d8d6ce;border:1.5px solid #1c1c1c;border-radius:1px;box-shadow:inset 1px 1px 0 #f4f4f0;box-sizing:border-box"></div>
<div class="t s" style="left:272.50px;top:571.06px;font-size:9.40px;letter-spacing:0.30px;color:#101010;font-weight:400;font-style:normal;">New <u>I</u>tem</div>
<div style="position:absolute;left:357.5px;top:569.2px;width:86px;height:17.9px;background:#d8d6ce;border:1.5px solid #1c1c1c;border-radius:1px;box-shadow:inset 1px 1px 0 #f4f4f0;box-sizing:border-box"></div>
<div class="t s" style="left:365.75px;top:571.06px;font-size:9.40px;letter-spacing:0.30px;color:#101010;font-weight:400;font-style:normal;"><u>E</u>dit</div>
<div style="position:absolute;left:450.5px;top:569.2px;width:86px;height:17.9px;background:#d8d6ce;border:1.5px solid #1c1c1c;border-radius:1px;box-shadow:inset 1px 1px 0 #f4f4f0;box-sizing:border-box"></div>
<div class="t s" style="left:458.75px;top:571.06px;font-size:9.40px;letter-spacing:0.30px;color:#101010;font-weight:400;font-style:normal;">P<u>a</u>tient Tasks</div>
<div style="position:absolute;left:544.25px;top:569.2px;width:86px;height:17.9px;background:#d8d6ce;border:1.5px solid #1c1c1c;border-radius:1px;box-shadow:inset 1px 1px 0 #f4f4f0;box-sizing:border-box"></div>
<div class="t s" style="left:552.00px;top:571.06px;font-size:9.40px;letter-spacing:0.30px;color:#101010;font-weight:400;font-style:normal;">Print / Po<u>s</u>t</div>
<div style="position:absolute;left:637.5px;top:569.2px;width:86px;height:17.9px;background:#d8d6ce;border:1.5px solid #1c1c1c;border-radius:1px;box-shadow:inset 1px 1px 0 #f4f4f0;box-sizing:border-box"></div>
<div class="t s" style="left:645.50px;top:571.06px;font-size:9.40px;letter-spacing:0.30px;color:#101010;font-weight:400;font-style:normal;">Refresh</div>
<svg style="position:absolute;left:177px;top:572.5px" width="12" height="12"><rect x="0.5" y="0.5" width="10.5" height="10.5" rx="1.5" fill="#2a68c8" stroke="#1a4a98" stroke-width="0.8"/><rect x="2.3" y="4.8" width="7" height="2" fill="#fff"/><rect x="4.8" y="2.3" width="2" height="7" fill="#fff"/></svg>
<div style="position:absolute;left:728.75px;top:569.2px;width:19px;height:17.9px;background:#d8d6ce;border:1.5px solid #1c1c1c;border-radius:1px;box-shadow:inset 1px 1px 0 #f4f4f0;box-sizing:border-box"></div>
<svg style="position:absolute;left:732.75px;top:574px" width="12" height="8"><polygon points="1,6 5.5,1 10,6" fill="#000"/></svg>
<div style="position:absolute;left:754.5px;top:569.2px;width:19px;height:17.9px;background:#d8d6ce;border:1.5px solid #1c1c1c;border-radius:1px;box-shadow:inset 1px 1px 0 #f4f4f0;box-sizing:border-box"></div>
<div style="position:absolute;left:761.0px;top:574.5px;width:6px;height:6px;background:#000"></div>
<div style="position:absolute;left:780px;top:569.2px;width:19px;height:17.9px;background:#d8d6ce;border:1.5px solid #1c1c1c;border-radius:1px;box-shadow:inset 1px 1px 0 #f4f4f0;box-sizing:border-box"></div>
<svg style="position:absolute;left:784px;top:574px" width="12" height="8"><polygon points="1,1 5.5,6 10,1" fill="#000"/></svg>
</body></html>
